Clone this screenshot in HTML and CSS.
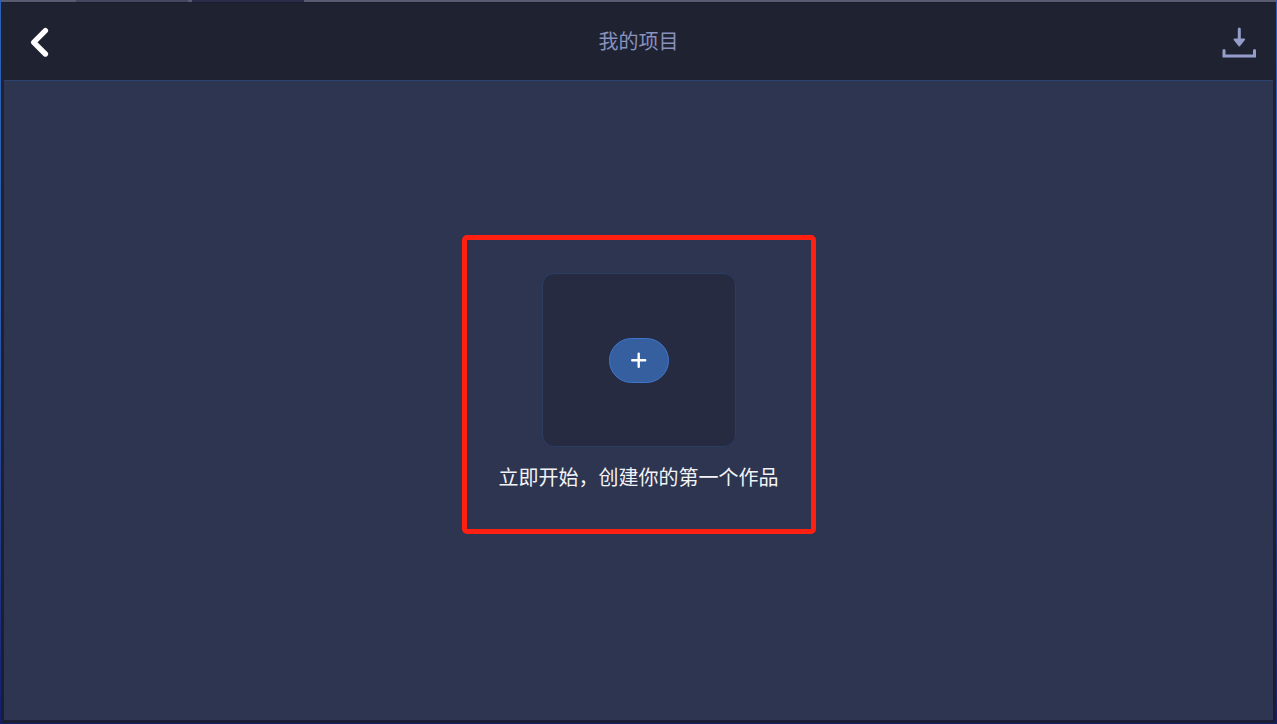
FILE: index.html
```
<!DOCTYPE html>
<html lang="zh-CN">
<head>
<meta charset="utf-8">
<meta name="viewport" content="width=device-width, initial-scale=1">
<title>我的项目</title>
<link rel="stylesheet" href="styles.css">
</head>
<body>
<div class="window">
  <div class="tab-strip">
    <span class="tab tab-dim"></span>
    <span class="tab tab-active"></span>
  </div>
  <div class="screen">
    <header class="topbar">
      <button class="icon-button" type="button" aria-label="返回">
        <svg width="36" height="32" viewBox="0 0 36 32" aria-hidden="true">
          <path d="M24.400 3.600 12.700 15.300l11.700 11.700" fill="none" stroke="#fff" stroke-width="5.400" stroke-linecap="round" stroke-linejoin="round"/>
        </svg>
      </button>
      <h1 class="title">我的项目</h1>
      <button class="icon-button icon-button-end" type="button" aria-label="导入">
        <svg width="34" height="32" viewBox="0 0 34 32" aria-hidden="true">
          <g fill="none" stroke="#959dca" stroke-width="3" stroke-linecap="round">
            <path d="M17.300 2v12"/>
            <path d="M2 23.500v5.500h30.500v-5.500"/>
          </g>
          <path d="M12.500 12.500h9.600L17.300 18.500z" fill="#959dca" stroke="#959dca" stroke-width="2" stroke-linejoin="round"/>
        </svg>
      </button>
    </header>
    <main class="workspace">
      <section class="starter">
        <div class="card">
          <button class="add-button" type="button" aria-label="新建作品">
            <svg width="16" height="16" viewBox="0 0 16 16" aria-hidden="true">
              <path d="M7.700 1.700v13M1.200 8.200h13" stroke="#fff" stroke-width="2.400" stroke-linecap="round"/>
            </svg>
          </button>
        </div>
        <p class="hint">立即开始，创建你的第一个作品</p>
      </section>
    </main>
  </div>
</div>
</body>
</html>
```
FILE: styles.css
```
* {
  box-sizing: border-box;
}

body {
  margin: 0;
  background: #1b1d35;
  font-family: "Noto Sans CJK SC", sans-serif;
}

button {
  padding: 0;
  border: 0;
  background: none;
  cursor: pointer;
}

svg {
  display: block;
}

.window {
  display: flex;
  flex-direction: column;
  min-height: 100vh;
  padding: 0 1px 1px;
  background: linear-gradient(#2d62b8, #2d5fb4 40%, #151f6c);
}

.tab-strip {
  display: flex;
  gap: 4px;
  height: 2px;
  padding-left: 75px;
  background: #5a5b71;
}

.tab {
  width: 112px;
}

.tab-dim {
  background: #45475f;
}

.tab-active {
  background: #292c49;
}

.screen {
  display: flex;
  flex: 1;
  flex-direction: column;
  padding: 0 3px 3px;
  border-top: 1px solid #1c1c31;
  background: linear-gradient(#1f2231 76px, #1b1d35);
}

.topbar {
  display: grid;
  grid-template-columns: 1fr auto 1fr;
  align-items: center;
  padding: 24px 17px 21px;
  background: #1f2231;
}

.title {
  margin: 0;
  padding-bottom: 4px;
  color: #8991bd;
  font-size: 20px;
  font-weight: 400;
  line-height: 28px;
}

.icon-button {
  justify-self: start;
}

.icon-button-end {
  justify-self: end;
}

.workspace {
  display: flex;
  flex: 1;
  align-items: center;
  justify-content: center;
  padding-bottom: 32px;
  border-top: 1px solid #2c426f;
  background: #2e3550;
}

.starter {
  display: flex;
  flex-direction: column;
  align-items: center;
  gap: 16px;
  padding: 33px 32px 38px;
  border: 5px solid #ff2012;
  border-radius: 5px;
}

.card {
  display: flex;
  align-items: center;
  justify-content: center;
  width: 194px;
  height: 174px;
  border: 1px solid #2b3d63;
  border-radius: 12px;
  background: #272b41;
}

.add-button {
  display: flex;
  align-items: center;
  justify-content: center;
  width: 60px;
  height: 45px;
  border: 1px solid #3d76cb;
  border-radius: 23px;
  background: #365f9f;
}

.hint {
  margin: 0;
  color: #f2f3f6;
  font-size: 20px;
  line-height: 28px;
}
```
